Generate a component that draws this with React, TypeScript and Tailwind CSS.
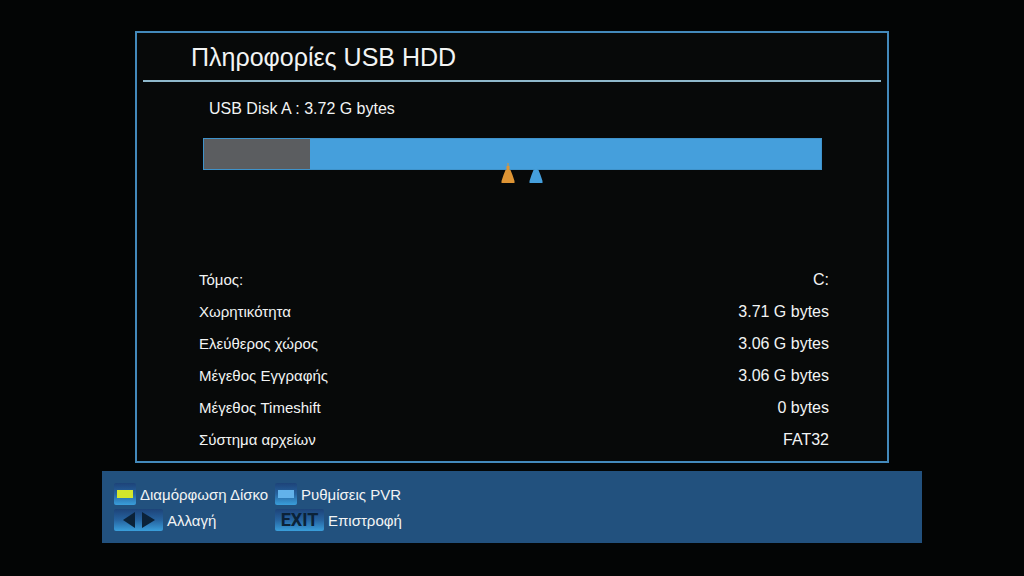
import type { ReactNode } from "react";

const volumeInfo = [
  { label: "Τόμος:", value: "C:" },
  { label: "Χωρητικότητα", value: "3.71 G bytes" },
  { label: "Ελεύθερος χώρος", value: "3.06 G bytes" },
  { label: "Μέγεθος Εγγραφής", value: "3.06 G bytes" },
  { label: "Μέγεθος Timeshift", value: "0 bytes" },
  { label: "Σύστημα αρχείων", value: "FAT32" },
];

const usedPercent = 17.2;

function Marker({ percent, className }: { percent: number; className: string }) {
  return (
    <svg
      viewBox="0 0 14 20"
      className={`absolute top-6 h-5 w-3.5 -translate-x-1/2 fill-current ${className}`}
      style={{ left: `${percent}%` }}
      aria-hidden="true"
    >
      <path d="M6.5 0h1v3h1v4h1l2 5 2 6v2H.5v-2l2-6 2-5h1V3h1z" />
    </svg>
  );
}

function UsageBar() {
  return (
    <div className="relative h-8 border border-[#3f93cb] bg-[#459fdc]">
      <div className="h-full bg-[#5b5d60]" style={{ width: `${usedPercent}%` }} />
      <Marker percent={49.2} className="text-[#dd9434]" />
      <Marker percent={53.8} className="text-[#459fdc]" />
    </div>
  );
}

function HintButton({ label, children }: { label: string; children: ReactNode }) {
  return (
    <button type="button" className="flex h-[26px] items-center gap-1 whitespace-nowrap text-left">
      {children}
      <span className="pt-0.5">{label}</span>
    </button>
  );
}

function ColorKey({ className }: { className: string }) {
  return (
    <span className="flex h-[22px] w-[22px] items-center justify-center rounded-xs bg-linear-to-b from-[#1d4378] via-[#26639f] to-[#3a9fdb]">
      <span className={`h-2 w-4 ${className}`} />
    </span>
  );
}

function WideKey({ children }: { children: ReactNode }) {
  return (
    <span className="flex h-[22px] w-[49px] items-center justify-center rounded-xs bg-linear-to-b from-[#1d4378] via-[#26639f] to-[#3a9fdb] text-[#0b2238]">
      {children}
    </span>
  );
}

export default function App() {
  return (
    <div className="min-h-screen bg-[#030505] px-[102px] py-[31px] font-['Liberation_Sans',Arial,sans-serif] text-base text-[#f2f4f4]">
      <main className="mx-[33px] border-2 border-[#4389bb] bg-[#070909] px-1.5 pb-[5px]">
        <h1 className="border-b-2 border-[#8fb9cc] pt-2 pb-[7px] pl-12 text-[25px] leading-8">
          Πληροφορίες USB HDD
        </h1>
        <div className="pt-[15px] pr-[59px] pl-[60px]">
          <p className="pl-1.5 leading-6">USB Disk A : 3.72 G bytes</p>
          <div className="mt-[17px]">
            <UsageBar />
          </div>
        </div>
        <table className="mt-[94px] w-full">
          <tbody>
            {volumeInfo.map((row) => (
              <tr key={row.label} className="h-8">
                <th scope="row" className="pl-14 text-left text-[15px] font-normal">
                  {row.label}
                </th>
                <td className="pr-13 text-right">{row.value}</td>
              </tr>
            ))}
          </tbody>
        </table>
      </main>

      <footer className="mt-2 grid grid-cols-[161px_1fr] bg-[#22517e] px-3 py-2.5 text-[15px]">
        <HintButton label="Διαμόρφωση Δίσκο">
          <ColorKey className="bg-[#d3e62c]" />
        </HintButton>
        <HintButton label="Ρυθμίσεις PVR">
          <ColorKey className="bg-[#62b2ea]" />
        </HintButton>
        <HintButton label="Αλλαγή">
          <WideKey>
            <svg viewBox="0 0 32 16" className="h-4 w-8 fill-current" aria-hidden="true">
              <path d="M12 0v16L0 8zM19 0v16l13-8z" />
            </svg>
          </WideKey>
        </HintButton>
        <HintButton label="Επιστροφή">
          <WideKey>
            <span className="font-['Roboto',Arial,sans-serif] text-lg leading-none font-bold">EXIT</span>
          </WideKey>
        </HintButton>
      </footer>
    </div>
  );
}
